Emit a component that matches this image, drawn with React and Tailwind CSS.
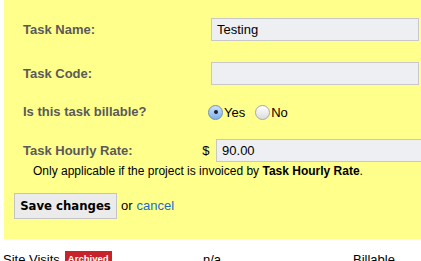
export default function App() {
  const label = "text-[13px] font-bold text-[#5a5a5a]";
  const field =
    "h-[23px] bg-[#eeeff2] border border-[#c8c8c8] px-[5px] text-[13px] text-black outline-none";

  return (
    <div className="w-[421px] h-[261px] overflow-hidden bg-white font-['Liberation_Sans',Arial,sans-serif] text-black">
      <div className="ml-[4px] w-[430px] bg-[#ffff8c] pt-[18px] pb-[20px] pl-[19px]">
        <div className="flex items-center h-[23px]">
          <div className={`${label} w-[188px]`}>Task Name:</div>
          <input className={`${field} w-[208px]`} defaultValue="Testing" />
        </div>

        <div className="flex items-center h-[23px] mt-[21px]">
          <div className={`${label} w-[188px]`}>Task Code:</div>
          <input className={`${field} w-[208px]`} defaultValue="" />
        </div>

        <div className="flex items-center h-[20px] mt-[17px]">
          <div className={`${label} w-[185px]`}>Is this task billable?</div>
          <div className="flex items-center text-[13px] leading-[15px]">
            <span className="w-[15px] h-[15px] rounded-full border border-[#6f8fbf] bg-gradient-to-b from-[#cfe3fb] to-[#7eb0ee] flex items-center justify-center">
              <span className="w-[4px] h-[4px] rounded-full bg-[#1a2230]" />
            </span>
            <span className="ml-[1px]">Yes</span>
            <span className="ml-[10px] w-[15px] h-[15px] rounded-full border border-[#a8a8a8] bg-gradient-to-b from-[#ffffff] to-[#dcdcdc]" />
            <span className="ml-[1px]">No</span>
          </div>
        </div>

        <div className="flex items-center h-[23px] mt-[17px]">
          <div className={`${label} w-[181px]`}>Task Hourly Rate:</div>
          <span className="text-[13px] w-[14px]">$</span>
          <input className={`${field} w-[220px]`} defaultValue="90.00" />
        </div>

        <div className="mt-[2px] pl-[10px] text-[12px] leading-[15px]">
          Only applicable if the project is invoiced by <b>Task Hourly Rate</b>.
        </div>

        <div className="flex items-center mt-[14px] -ml-[9px] text-[13px]">
          <button className="h-[26px] w-[103px] bg-[#ebebeb] border border-[#c4c4c4] text-black font-bold text-[13px] font-['DejaVu_Sans_Condensed','DejaVu_Sans',sans-serif]">
            Save changes
          </button>
          <span className="ml-[4px]">or</span>
          <a href="#" className="ml-[4px] text-[#1c6cc8]">cancel</a>
        </div>
      </div>

      <div className="flex items-start mt-[13px] text-[13px] leading-[15px]">
        <div className="ml-[3px] w-[200px] flex items-start">
          <span>Site Visits</span>
          <span className="ml-[5px] -mt-[1px] bg-[#c8232a] text-white text-[9.5px] font-bold px-[3px] leading-[16px]">
            Archived
          </span>
        </div>
        <div className="w-[150px]">n/a</div>
        <div>Billable</div>
      </div>
    </div>
  );
}
